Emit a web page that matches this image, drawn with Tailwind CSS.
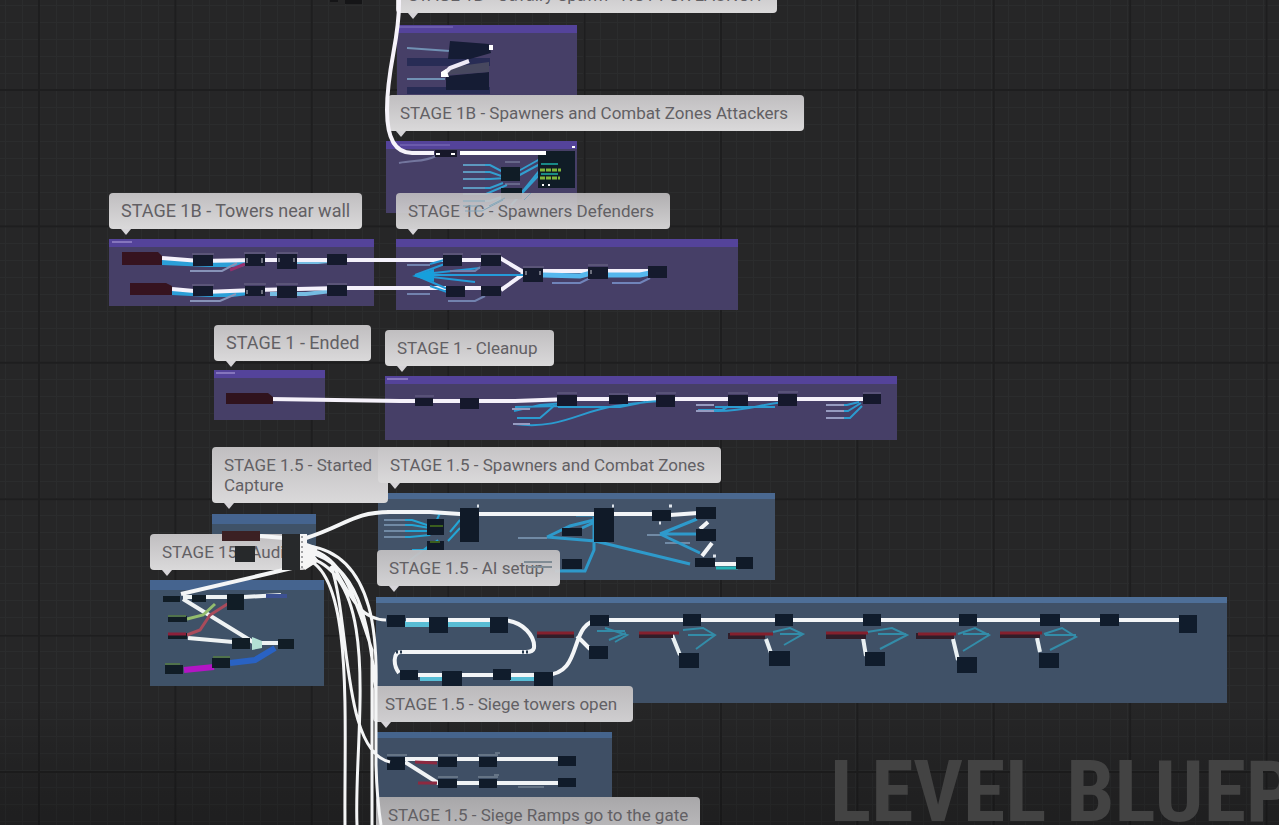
<!DOCTYPE html>
<html lang="en">
<head>
<meta charset="utf-8">
<title>Level Blueprint</title>
<script src="https://cdn.jsdelivr.net/npm/@tailwindcss/browser@4"></script>
</head>
<body class="bg-[#262627]">
<main class="relative h-screen w-full overflow-hidden bg-[#262627] font-['Roboto',sans-serif] text-[17px] leading-5 text-[#626064]">

  <!-- Graph grid -->
  <svg class="absolute inset-0 h-full w-full" aria-hidden="true">
    <defs>
      <pattern id="minor" x="39" y="90" width="17" height="17" patternUnits="userSpaceOnUse"><path d="M0 .5H17M.5 0V17" stroke="#2b2c2d" fill="none"/></pattern>
      <pattern id="major" x="38" y="89" width="136.4" height="136.4" patternUnits="userSpaceOnUse"><path d="M0 1H137M1 0V137" stroke="#1e1e1f" stroke-width="2" fill="none"/></pattern>
      <linearGradient id="shade" x1="0" y1="0" x2="0" y2="1"><stop offset="0" stop-color="#000" stop-opacity="0"/><stop offset=".85" stop-color="#000" stop-opacity="0"/><stop offset="1" stop-color="#000" stop-opacity=".2"/></linearGradient>
    </defs>
    <rect width="100%" height="100%" fill="url(#minor)"/>
    <rect width="100%" height="100%" fill="url(#major)"/>
    <rect width="100%" height="100%" fill="url(#shade)"/>
  </svg>

  <p class="absolute left-[830px] top-[742px] whitespace-nowrap font-['Roboto_Condensed','Liberation_Sans_Narrow',Roboto,sans-serif] text-[86px] leading-[100px] font-bold text-[#434343]">LEVEL BLUEPRINT</p>

  <!-- Comment regions -->
  <div class="absolute left-[397px] top-[25px] h-[70px] w-[180px] border-t-8 border-[#54439a] bg-[#463f67]"></div>
  <div class="absolute left-[386px] top-[141px] h-[72px] w-[191px] border-t-8 border-[#54439a] bg-[#463f67]"></div>
  <div class="absolute left-[109px] top-[239px] h-[67px] w-[265px] border-t-8 border-[#54439a] bg-[#463f67]"></div>
  <div class="absolute left-[396px] top-[239px] h-[71px] w-[342px] border-t-8 border-[#54439a] bg-[#463f67]"></div>
  <div class="absolute left-[214px] top-[370px] h-[50px] w-[111px] border-t-8 border-[#54439a] bg-[#463f67]"></div>
  <div class="absolute left-[385px] top-[376px] h-[64px] w-[512px] border-t-8 border-[#54439a] bg-[#463f67]"></div>
  <div class="absolute left-[212px] top-[514px] h-[48px] w-[104px] border-t-10 border-[#45648f] bg-[#3f5268]"></div>
  <div class="absolute left-[150px] top-[580px] h-[106px] w-[174px] border-t-10 border-[#45648f] bg-[#3f5268]"></div>
  <div class="absolute left-[378px] top-[493px] h-[87px] w-[397px] border-t-6 border-[#4a6890] bg-[#435369]"></div>
  <div class="absolute left-[376px] top-[597px] h-[106px] w-[851px] border-t-6 border-[#4e6f98] bg-[#405167]"></div>
  <div class="absolute left-[376px] top-[732px] h-[70px] w-[236px] border-t-6 border-[#45648c] bg-[#3f4f65]"></div>

  <!-- Wires and nodes that pass behind the titles -->
  <svg class="absolute inset-0 h-full w-full" fill="none" aria-hidden="true">
    <!-- Cavalry and attackers -->
    <path d="M407 48L450 51M407 79H445" stroke="#7191b4" stroke-width="2"/>
    <path d="M407 58H490V66H407zM407 87H490V94H407z" fill="#282c55"/>
    <path d="M450 41L489 44L491 53L470 59H448zM446 76L489 72V90H446z" fill="#151c34"/>
    <path d="M452 67L489 62V72L446 75z" fill="#47485f"/>
    <path d="M445 73L450 68L469 61" stroke="#eeeaf5" stroke-width="4"/>
    <path d="M441 72l5-3 3 8h-8zM489 45h4v5h-4z" fill="#fff"/>
    <path d="M399 27H453M400 145H450" stroke="#8175bd"/>
    <path d="M399 163C415 160 425 162 436 156" stroke="#73769e" stroke-width="2"/>
    <path d="M463 165H490L507 174M463 172H490L507 178M463 179H490L507 178M463 188H490L503 183M463 194H486L507 185M463 201H490L520 190M515 173L540 159M516 177L540 164M518 197L540 170M511 205L540 174M482 211L515 190" stroke="#329fd0" stroke-width="2"/>
    <path d="M463 165H485M463 172H485M463 179H485M463 188H485M463 194H485M463 201H485M505 162H520M505 184H520" stroke="#8991ae"/>
    <path d="M501 167h19v14h-19zM501 188h21v11h-21zM538 151h37v37h-37z" fill="#101c26"/>
    <path d="M540 170H561M540 178H560" stroke="#7fb53a" stroke-width="3" stroke-dasharray="5 1"/>
    <path d="M541 164H558M541 174H558" stroke="#198a86" stroke-width="2"/>
    <path d="M542 185h2M548 185h2M572 147h3" stroke="#fff" stroke-width="2"/>
    <path d="M460 153H546" stroke="#fff" stroke-width="4"/>
    <path d="M435 150h22v7h-22z" fill="#171729"/>
    <path d="M436 154h4M451 154h4" stroke="#fff" stroke-width="2"/>

    <!-- Towers and defenders -->
    <path d="M162 262L210 264H240L255 260M172 292L210 294H232L255 291" stroke="#2b9fd8" stroke-width="6"/>
    <path d="M190 271H222L237 263M190 301H220L236 294" stroke="#8793b8" stroke-width="2"/>
    <path d="M230 270L245 264" stroke="#95306d" stroke-width="3"/>
    <path d="M278 262H318L340 260M270 294H306L340 290" stroke="#75bce2" stroke-width="4"/>
    <path d="M162 258L200 261L255 260H500M172 289L205 292L255 290L340 288H500" stroke="#f4f1fb" stroke-width="4"/>
    <path d="M500 258L525 273L501 290M525 271H655" stroke="#f4f1fb" stroke-width="4"/>
    <path d="M543 275L580 276L595 272M608 275L640 275L655 272" stroke="#55b7ed" stroke-width="5"/>
    <path d="M552 283H580L590 278M612 283H640L650 278" stroke="#7084ba" stroke-width="2"/>
    <path d="M415 275H525M415 275L450 262M415 275L450 290M415 275L480 268M415 275L475 282M430 264L455 257M430 286L450 293" stroke="#249bd9" stroke-width="2"/>
    <path d="M412 276l22-7v13z" fill="#169fdc"/>
    <path d="M407 265H430M407 294H430M450 271H475L480 267M448 301H475L485 296" stroke="#7282ae" stroke-width="2"/>
    <path d="M122 252h36l4 4v9h-40zM130 283h36l6 3v9h-42z" fill="#36131f"/>
    <path d="M193 255h20v11h-20zM245 254h20v12h-20zM277 254h20v15h-20zM327 254h20v11h-20zM193 286h20v10h-20zM245 286h20v10h-20zM277 286h20v12h-20zM327 285h20v11h-20zM443 255h19v11h-19zM481 255h20v11h-20zM446 286h19v11h-19zM481 286h20v10h-20zM523 268h20v14h-20zM588 267h20v12h-20zM648 266h19v12h-19z" fill="#151a2d"/>
    <path d="M192 254h22M244 253h22M276 253h22M192 285h22M244 284h22M276 284h22M327 284h20M443 254h20M481 254h20M523 267h21M588 265h20" stroke="#706c8b"/>
    <path d="M247 258v5M262 258v5M279 258v4M294 258v4M247 290v4M262 290v4M526 271v4M540 271v4M591 270v4" stroke="#c5c5cf"/>

    <!-- Ended and cleanup -->
    <path d="M270 399L400 401L515 401L570 399H865" stroke="#f5f1fa" stroke-width="4"/>
    <path d="M514 411L540 405L565 403M515 407L560 406M515 424C560 430 580 411 615 406S645 402 660 401M517 418L540 418L555 405M558 407H620L645 402M698 410H722L733 404M714 411C745 412 760 404 785 402M715 407H775M828 405H847L859 402M828 411H848L861 403M828 418H850L862 406" stroke="#2b9bd0" stroke-width="2"/>
    <path d="M512 409H530M513 424H530M696 405H714M696 411H714M826 405H844M826 411H844M826 418H844" stroke="#969bc0" stroke-width="2"/>
    <path d="M226 393h42l5 4v7h-47z" fill="#30131d"/>
    <path d="M415 398h18v8h-18zM460 398h19v11h-19zM557 395h20v11h-20zM609 395h19v9h-19zM656 395h19v12h-19zM728 395h20v11h-20zM778 394h19v12h-19zM863 394h18v10h-18z" fill="#15182c"/>
    <path d="M557 393h20M609 394h20M656 393h20M728 393h20M778 392h20M863 393h18M415 396h19" stroke="#6a678a"/>
    <path d="M387 379H408M216 373H235M112 242H132" stroke="#8575bd" stroke-width="2"/>

    <!-- Stage 1.5 spawners -->
    <path d="M385 520H412L430 526M385 525H412L430 528M385 531H412L430 531M385 537H410L430 535M412 550H425L438 540M410 560L430 545M430 535L440 513M448 541L460 528M450 532L460 520M408 511L445 514" stroke="#24a5d5" stroke-width="2"/>
    <path d="M384 520H405M384 525H405M384 531H405M384 537H405M518 538H547M647 535H662M665 543H690" stroke="#718aa5" stroke-width="2"/>
    <path d="M547 537L570 526L594 520M547 537L595 541L690 564M594 517V550L585 571H555M582 528L595 522M576 515H595M660 534L697 519M660 534L697 534M660 534L700 553" stroke="#2e9acb" stroke-width="3"/>
    <path d="M387 512L430 512L460 514H655M670 515L698 513M700 529L708 522M702 556L712 543M715 564H740" stroke="#f3f5f7" stroke-width="4"/>
    <path d="M716 568H738" stroke="#28b4b8" stroke-width="3"/>
    <path d="M427 519h17v16h-17zM427 541h17v9h-17zM460 508h19v34h-19zM562 528h20v8h-20zM594 508h20v34h-20zM562 559h20v10h-20zM652 510h19v11h-19zM696 507h20v12h-20zM696 529h20v12h-20zM695 558h20v9h-20zM736 557h17v12h-17z" fill="#101a28"/>
    <path d="M430 526h13M430 542h10" stroke="#3a5e1e" stroke-width="2"/>
    <path d="M477 506h2M612 506h2M669 506h3M659 523h2M713 556h3" stroke="#dfe5ec" stroke-width="3"/>

    <!-- AI setup -->
    <path d="M405 624H500M420 678H450M510 678H535" stroke="#58bdd5" stroke-width="6"/>
    <path d="M406 620H500C525 620 535 638 534 648Q533 652 526 652H401C393 652 393 665 399 673M410 675H545C585 675 567 621 600 620H1180M577 636L590 649" stroke="#f3f5f7" stroke-width="4"/>
    <path d="M597 631H625M609 640L626 633M605 628L627 635L615 642M683 630L703 628L715 635L696 649M773 632L790 628L803 634L784 645M867 632L892 628L907 635L880 649M958 634L975 628L989 635L963 651M1044 634L1062 628L1076 637L1050 650M688 635H715M780 634H803M878 634H906M963 634H989M1045 635H1076" stroke="#338ca8" stroke-width="2"/>
    <path d="M672 635L680 655M766 639L771 653M863 638L866 656M953 639L958 660M1037 638L1040 652" stroke="#e8eff2" stroke-width="4"/>
    <path d="M537 632h37v6h-37zM639 632h34v6h-34zM728 633h37v6h-37zM826 633h40v6h-40zM916 633h38v6h-38zM1000 632h40v6h-40z" fill="#301d29"/>
    <path d="M537 633h37M639 633h40M730 634h43M826 633h42M918 634h38M1000 633h42" stroke="#84202e" stroke-width="3"/>
    <path d="M387 615h18v12h-18zM429 617h19v16h-19zM490 617h18v16h-18zM400 670h18v10h-18zM442 671h20v17h-20zM493 669h18v11h-18zM534 672h19v16h-19zM590 615h19v11h-19zM589 646h19v13h-19zM683 614h18v12h-18zM679 653h20v15h-20zM775 614h18v12h-18zM769 651h21v15h-21zM863 614h18v12h-18zM865 652h20v14h-20zM959 614h18v12h-18zM957 657h20v16h-20zM1040 614h20v12h-20zM1039 653h20v15h-20zM1100 614h19v12h-19zM1179 615h18v18h-18z" fill="#101c2c"/>
    <path d="M396 652h8M522 652h8" stroke="#24374b" stroke-width="3" stroke-dasharray="2 2"/>

    <!-- Siege towers -->
    <path d="M405 759H560M405 762L438 783H560" stroke="#f0f3f5" stroke-width="4"/>
    <path d="M415 762L437 763M418 783H437" stroke="#8d2940" stroke-width="3"/>
    <path d="M387 757h18v13h-18zM438 757h19v10h-19zM479 757h18v10h-18zM558 756h18v10h-18zM438 779h19v9h-19zM479 779h18v9h-18zM558 778h18v9h-18z" fill="#101b2a"/>
    <path d="M438 755h20M478 755h20M387 755h20M438 777h20M478 777h20M495 753h5M494 775h5M518 787h26" stroke="#8c9aa7"/>
    <path d="M330 0h8v2h-8zM345 0h17v4h-17z" fill="#151517"/>
  </svg>

  <!-- Comment titles -->
  <h2 class="absolute left-[396px] top-[-23px] rounded-sm bg-linear-to-b from-[#c0bec0] to-[#dad9da] py-2 pr-4 pl-3 whitespace-nowrap after:absolute after:left-3 after:top-full after:border-x-5 after:border-t-6 after:border-x-transparent after:border-t-[#d6d4d8]">STAGE 1B - Cavalry Spawn - NOT FOR LAUNCH</h2>
  <h2 class="absolute left-[388px] top-[95px] rounded-sm bg-linear-to-b from-[#c0bec0] to-[#dad9da] py-2 pr-4 pl-3 whitespace-nowrap after:absolute after:left-2 after:top-full after:border-x-5 after:border-t-6 after:border-x-transparent after:border-t-[#d6d4d8]">STAGE 1B - Spawners and Combat Zones Attackers</h2>
  <h2 class="absolute left-[109px] top-[193px] rounded-sm bg-linear-to-b from-[#c0bec0] to-[#dad9da] px-3 py-2 text-[18px] whitespace-nowrap after:absolute after:left-3 after:top-full after:border-x-5 after:border-t-6 after:border-x-transparent after:border-t-[#d6d4d8]">STAGE 1B - Towers near wall</h2>
  <h2 class="absolute left-[396px] top-[193px] rounded-sm bg-linear-to-b from-[#c0bec0]/90 to-[#dad9da]/95 py-2 pr-4 pl-3 whitespace-nowrap after:absolute after:left-3 after:top-full after:border-x-5 after:border-t-6 after:border-x-transparent after:border-t-[#d6d4d8]">STAGE 1C - Spawners Defenders</h2>
  <h2 class="absolute left-[214px] top-[325px] rounded-sm bg-linear-to-b from-[#c0bec0] to-[#dad9da] py-2 pr-3 pl-3 text-[18px] whitespace-nowrap after:absolute after:left-3 after:top-full after:border-x-5 after:border-t-6 after:border-x-transparent after:border-t-[#d6d4d8]">STAGE 1 - Ended</h2>
  <h2 class="absolute left-[385px] top-[330px] rounded-sm bg-linear-to-b from-[#c0bec0] to-[#dad9da] py-2 pr-4 pl-3 whitespace-nowrap after:absolute after:left-3 after:top-full after:border-x-5 after:border-t-6 after:border-x-transparent after:border-t-[#d6d4d8]">STAGE 1 - Cleanup</h2>
  <h2 class="absolute left-[212px] top-[447px] w-[176px] rounded-sm bg-linear-to-b from-[#c0bec0] to-[#dad9da] py-2 pl-3 after:absolute after:left-3 after:top-full after:border-x-5 after:border-t-6 after:border-x-transparent after:border-t-[#d6d4d8]">STAGE 1.5 - Started Capture</h2>
  <h2 class="absolute left-[378px] top-[447px] rounded-sm bg-linear-to-b from-[#c6c4c6] to-[#dad9da] py-2 pr-4 pl-3 whitespace-nowrap after:absolute after:left-3 after:top-full after:border-x-5 after:border-t-6 after:border-x-transparent after:border-t-[#d6d4d8]">STAGE 1.5 - Spawners and Combat Zones</h2>
  <h2 class="absolute left-[150px] top-[534px] rounded-sm bg-linear-to-b from-[#c0bec0] to-[#dad9da] px-3 py-2 whitespace-nowrap after:absolute after:left-3 after:top-full after:border-x-5 after:border-t-6 after:border-x-transparent after:border-t-[#d6d4d8]">STAGE 15 - Audio</h2>
  <h2 class="absolute left-[377px] top-[550px] rounded-sm bg-linear-to-b from-[#c0bec0]/95 to-[#dad9da]/95 py-2 pr-4 pl-3 whitespace-nowrap after:absolute after:left-3 after:top-full after:border-x-5 after:border-t-6 after:border-x-transparent after:border-t-[#d6d4d8]">STAGE 1.5 - AI setup</h2>
  <h2 class="absolute left-[373px] top-[686px] rounded-sm bg-linear-to-b from-[#bcbabc] to-[#cfced0] py-2 pr-4 pl-3 whitespace-nowrap after:absolute after:left-2 after:top-full after:border-x-5 after:border-t-6 after:border-x-transparent after:border-t-[#d6d4d8]">STAGE 1.5 - Siege towers open</h2>
  <h2 class="absolute left-[376px] top-[797px] rounded-sm bg-linear-to-b from-[#a8a7a9] to-[#bcbbbd] px-3 py-2 whitespace-nowrap">STAGE 1.5 - Siege Ramps go to the gate</h2>

  <!-- Wires and nodes that pass over the titles -->
  <svg class="absolute inset-0 h-full w-full" fill="none" aria-hidden="true">
    <path d="M399 0C400 40 387 65 387 110C387 143 398 153 412 153H434" stroke="#f6f3fa" stroke-width="4"/>
    <path d="M463 201H485M463 206H480M465 211H482M482 211L503 200M489 206L505 198M524 200L531 193" stroke="#85a6b8"/>
    <path d="M524 562H552M527 567H552" stroke="#7f8b94" stroke-width="2"/>
    <!-- Sequence fan-out -->
    <path d="M260 536L284 538M306 538C345 526 353 512 390 512M181 594L292 568" stroke="#f4f5f6" stroke-width="4"/>
    <path d="M308 546C378 555 377 650 376 690V765Q377 800 381 825M308 552C358 565 368 618 376 690M306 557C385 575 353 740 357 825M306 559C354 575 344 720 345 825M330 560C352 600 361 620 386 620M331 566C350 620 342 752 390 762M308 549C345 556 357 605 372 650V825" stroke="#f4f5f6" stroke-width="3"/>
    <path d="M299 534h8v30l-8 5z" fill="#f5f5f5"/>
    <path d="M304 542l14 5-3 9 4 5-14 9-5-6z" fill="#f5f5f5"/>
    <path d="M222 531h38v10h-38z" fill="#3b2023"/>
    <path d="M235 546h20v16h-20zM282 534h18v36h-18z" fill="#27292b"/>
    <path d="M302 536v32" stroke="#515356" stroke-dasharray="2 3"/>

    <!-- Audio graph -->
    <path d="M183 597L228 597M244 597L281 595M183 599L253 642M188 638L233 642M253 643H278" stroke="#eef2f3" stroke-width="4"/>
    <path d="M187 619L203 615L215 604" stroke="#93bd6d" stroke-width="3"/>
    <path d="M187 635L200 630L210 615L229 603" stroke="#a94b5b" stroke-width="3"/>
    <path d="M184 670L214 667" stroke="#b315c5" stroke-width="6"/>
    <path d="M230 663L255 660L275 648" stroke="#2962c3" stroke-width="6"/>
    <path d="M252 637l10 4v7l-10 2z" fill="#b3e0d5"/>
    <path d="M163 596h17v6h-17zM192 595h14v7h-14zM227 594h17v16h-17zM168 616h19v6h-19zM168 633h19v6h-19zM232 638h18v11h-18zM278 639h16v10h-16zM212 658h18v10h-18zM165 665h18v9h-18z" fill="#111d26"/>
    <path d="M168 634h18" stroke="#8c203a" stroke-width="3"/>
    <path d="M168 616h18M213 657h17M165 664h15" stroke="#50724b" stroke-width="2"/>
    <path d="M266 596h21" stroke="#3d5192" stroke-width="4"/>
  </svg>
</main>
</body>
</html>
